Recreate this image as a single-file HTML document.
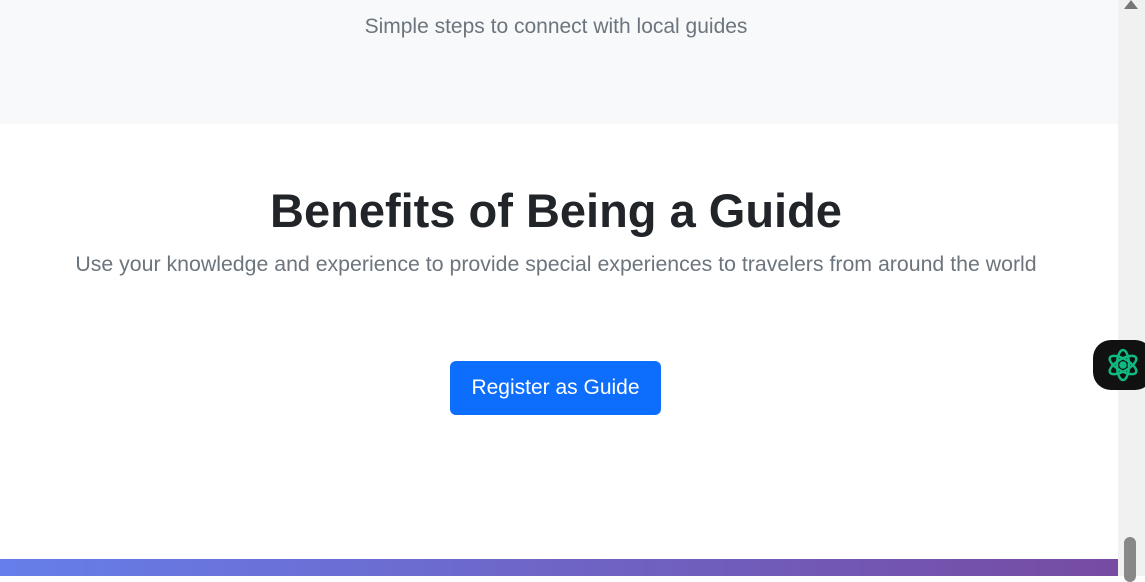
<!DOCTYPE html>
<html><head><style>
body{margin:0;width:1145px;height:576px;overflow:hidden;position:relative;background:#fff;font-family:"Liberation Sans",sans-serif}
.top{position:absolute;left:0;top:0;width:1118px;height:124px;background:#f8f9fa}
.sub{position:absolute;left:0;width:1112px;text-align:center;color:#6c757d;font-weight:300}
h2{position:absolute;top:183px;left:0;width:1112px;text-align:center;margin:0;font-size:47px;font-weight:600;color:#212529}
.btn{position:absolute;left:450px;top:361px;width:211px;height:54px;background:#0d6efd;border-radius:6px;color:#fff;font-size:21px;line-height:54px;text-align:center}
.grad{position:absolute;left:0;top:559px;width:1118px;height:17px;background:linear-gradient(90deg,#667eea,#764ba2)}
.sb{position:absolute;left:1118px;top:0;width:27px;height:576px;background:#f1f1f1}
.thumb{position:absolute;left:1124px;top:537px;width:12px;height:45px;border-radius:6px;background:#888}
.fab{position:absolute;left:1093px;top:340px;width:60px;height:50px;border-radius:18px;background:#111}
</style></head><body>
<div class="top"></div>
<div class="sub" style="top:15px;font-size:21px">Simple steps to connect with local guides</div>
<h2>Benefits of Being a Guide</h2>
<div class="sub" style="top:252px;font-size:21.3px;left:0">Use your knowledge and experience to provide special experiences to travelers from around the world</div>
<div class="btn">Register as Guide</div>
<div class="grad"></div>
<div class="sb"></div>
<div style="position:absolute;left:1124px;top:0;width:0;height:0;border-left:7px solid transparent;border-right:7px solid transparent;border-bottom:9px solid #777"></div>
<div class="thumb"></div>
<div class="fab"><svg width="40" height="40" viewBox="-20 -20 40 40" style="position:absolute;left:10px;top:5px" fill="none" stroke="#10b981" stroke-width="2.5"><ellipse rx="15" ry="6" transform="rotate(30)"/><ellipse rx="15" ry="6" transform="rotate(90)"/><ellipse rx="15" ry="6" transform="rotate(150)"/><circle r="2.5" fill="#10b981"/></svg></div>
</body></html>
